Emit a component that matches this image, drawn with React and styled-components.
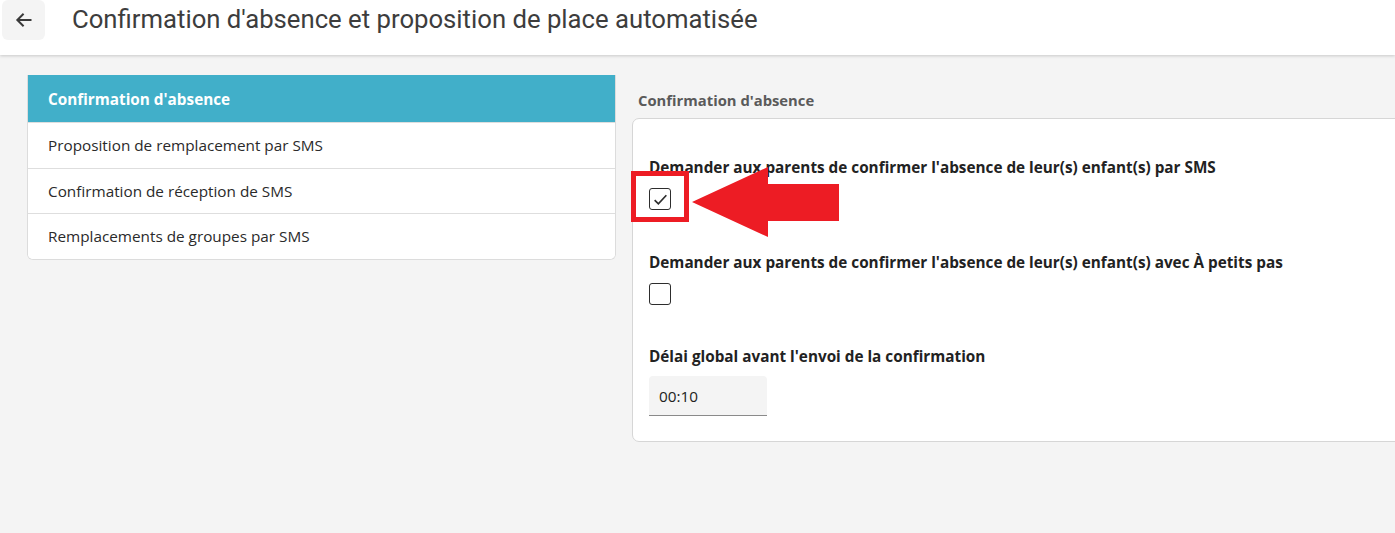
import React from "react";
import styled, { createGlobalStyle } from "styled-components";

const GlobalStyle = createGlobalStyle`
  html, body {
    margin: 0;
    padding: 0;
    background: #f4f4f4;
    overflow: hidden;
  }
  body {
    font-family: "Open Sans", "Noto Sans", "Liberation Sans", sans-serif;
    color: #222;
  }
`;

const Header = styled.header`
  height: 55px;
  background: #fff;
  display: flex;
  align-items: flex-start;
  gap: 27px;
  box-shadow: 0 1px 3px rgba(0, 0, 0, 0.18);
  position: relative;
  z-index: 1;
`;

const BackButton = styled.button`
  width: 43px;
  height: 40px;
  margin-left: 2px;
  border: none;
  border-radius: 6px;
  background: #f4f4f4;
  display: flex;
  align-items: center;
  justify-content: center;
  padding: 0;
  cursor: pointer;
`;

const Title = styled.h1`
  margin: 0;
  padding-top: 3px;
  font-family: Roboto, "Liberation Sans", sans-serif;
  font-weight: 400;
  font-size: 25.7px;
  line-height: 32px;
  color: #3d3d3d;
`;

const Page = styled.main`
  display: grid;
  grid-template-columns: 589px 800px;
  gap: 16px;
  padding: 20px 0 0 27px;
`;

const Menu = styled.nav`
  align-self: start;
  background: #fff;
  border: 1px solid #dcdcdc;
  border-top: none;
  border-radius: 0 0 6px 6px;
  overflow: hidden;
`;

const MenuItem = styled.div`
  height: ${({ active }) => (active ? "47px" : "44.6px")};
  display: flex;
  align-items: center;
  font-size: 15.3px;
  background: ${({ active }) => (active ? "#41afc9" : "#fff")};
  color: ${({ active }) => (active ? "#fff" : "#2a2a2a")};
  font-weight: ${({ active }) => (active ? 700 : 400)};
  border-top: ${({ active }) => (active ? "none" : "1px solid #dedede")};
  margin: ${({ active }) => (active ? "0 -1px" : "0")};
  padding-left: ${({ active }) => (active ? "21px" : "20px")};
`;

const Content = styled.section`
  padding-top: 15px;
`;

const SectionTitle = styled.h2`
  margin: 0 0 7px 6px;
  font-size: 14.8px;
  line-height: 21px;
  font-weight: 700;
  color: #5a5a5a;
`;

const Card = styled.div`
  position: relative;
  background: #fff;
  border: 1px solid #d6d6d6;
  border-radius: 7px;
  padding: 38px 16px 25px;
`;

const Field = styled.div`
  display: flex;
  flex-direction: column;
  align-items: flex-start;
  gap: ${({ last }) => (last ? "9px" : "10px")};
  margin-bottom: ${({ last }) => (last ? "0" : "42px")};
  &:nth-child(2) {
    margin-bottom: 41px;
  }
`;

const Label = styled.label`
  font-size: 15.3px;
  line-height: 21px;
  font-weight: 700;
  color: #222;
`;

const CheckBox = styled.span`
  width: 22px;
  height: 22px;
  box-sizing: border-box;
  border: 1.5px solid #2d2d2d;
  border-radius: 3px;
  display: flex;
  align-items: center;
  justify-content: center;
  background: #fff;
`;

const TimeInput = styled.div`
  width: 118px;
  height: 40px;
  box-sizing: border-box;
  padding-left: 10px;
  display: flex;
  align-items: center;
  background: #f4f4f4;
  border-radius: 4px 4px 0 0;
  border-bottom: 1px solid #8a8a8a;
  font-size: 15.3px;
  color: #222;
`;

const Highlight = styled.div`
  position: absolute;
  left: -2px;
  top: 52px;
  width: 58px;
  height: 51px;
  box-sizing: border-box;
  border: 5px solid #ed1c24;
  pointer-events: none;
`;

const Arrow = styled.svg`
  position: absolute;
  left: 59px;
  top: 48px;
  pointer-events: none;
`;

const Check = () => (
  <svg width="17" height="17" viewBox="0 0 16 16">
    <path d="M2.5 8.5 L6 12 L13.5 4" fill="none" stroke="#2d2d2d" strokeWidth="1.6" />
  </svg>
);

export default function App() {
  const items = [
    "Confirmation d'absence",
    "Proposition de remplacement par SMS",
    "Confirmation de réception de SMS",
    "Remplacements de groupes par SMS",
  ];
  return (
    <>
      <GlobalStyle />
      <Header>
        <BackButton aria-label="Retour">
          <svg width="20" height="20" viewBox="0 0 24 24">
            <path d="M21 12H4M11.5 4.5L4 12l7.5 7.5" fill="none" stroke="#3a3a3a" strokeWidth="2.4" />
          </svg>
        </BackButton>
        <Title>Confirmation d'absence et proposition de place automatisée</Title>
      </Header>
      <Page>
        <Menu>
          {items.map((it, i) => (
            <MenuItem key={it} active={i === 0}>
              {it}
            </MenuItem>
          ))}
        </Menu>
        <Content>
          <SectionTitle>Confirmation d'absence</SectionTitle>
          <Card>
            <Field>
              <Label>Demander aux parents de confirmer l'absence de leur(s) enfant(s) par SMS</Label>
              <CheckBox>
                <Check />
              </CheckBox>
            </Field>
            <Field>
              <Label>Demander aux parents de confirmer l'absence de leur(s) enfant(s) avec À petits pas</Label>
              <CheckBox />
            </Field>
            <Field last>
              <Label>Délai global avant l'envoi de la confirmation</Label>
              <TimeInput>00:10</TimeInput>
            </Field>
            <Highlight />
            <Arrow width="148" height="72" viewBox="0 0 148 72">
              <polygon points="0,35 76,0 76,17 147,17 147,54 76,54 76,70" fill="#ed1c24" />
            </Arrow>
          </Card>
        </Content>
      </Page>
    </>
  );
}
